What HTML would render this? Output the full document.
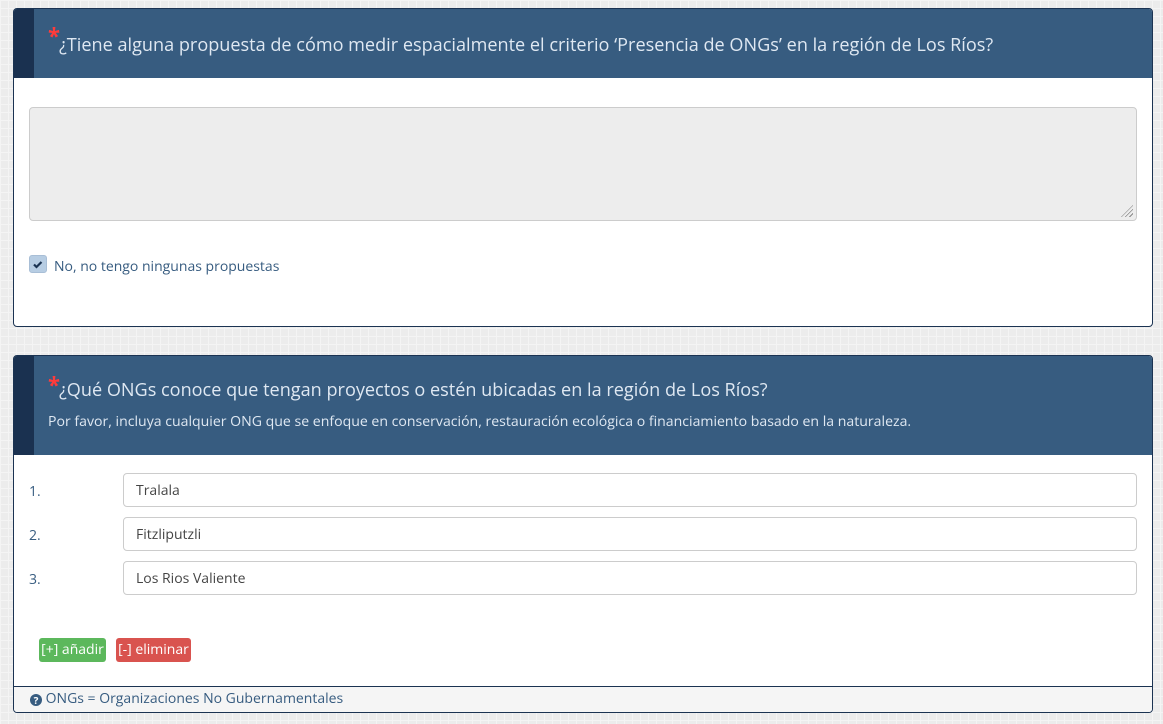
<!DOCTYPE html>
<html><head><meta charset="utf-8"><style>
*{box-sizing:border-box;margin:0;padding:0}
body{width:1163px;height:724px;overflow:hidden;font-family:"Open Sans","Liberation Sans","DejaVu Sans",sans-serif;background-color:#ececec;background-image:linear-gradient(#f4f4f4 1px,transparent 1px),linear-gradient(90deg,#f4f4f4 1px,transparent 1px);background-size:8px 8px;position:relative}
.panel{position:absolute;left:13px;width:1140px;background:#fff;border:1px solid #1b3352;border-radius:4px;overflow:hidden}
.hdr{background:#375c80;border-left:20px solid #1a3150;color:#dfe8f2;position:relative}
.ast{color:#ff3b3b;font-size:22px;font-weight:bold;position:absolute;top:12px;left:14px}
.t{font-size:18.1px}
.ta{position:absolute;left:15px;top:98px;width:1108px;height:114px;background:#ededed;border:1px solid #ccc;border-radius:4px}
.grip{position:absolute;right:3px;bottom:3px;width:12px;height:12px;background:repeating-linear-gradient(135deg,transparent 0 2px,#888 2px 3px);clip-path:polygon(100% 0,100% 100%,0 100%)}
.lbl{position:absolute;color:#375c80;font-size:14px}
.inp{position:absolute;left:109px;width:1014px;height:34px;border:1px solid #ccc;border-radius:4px;font-size:14px;color:#444;padding:7px 12px}
.btn{position:absolute;top:282px;height:24px;color:#fff;font-size:14px;border-radius:3px;padding:2px 0;line-height:20px;white-space:nowrap;overflow:hidden;text-align:center}
</style></head><body>
<div class="panel" style="top:8px;height:319px">
 <div class="hdr" style="height:69px"><span class="ast">*</span><div class="t" style="position:absolute;left:25px;top:24px">¿Tiene alguna propuesta de cómo medir espacialmente el criterio ‘Presencia de ONGs’ en la región de Los Ríos?</div></div>
 <div class="ta"><div class="grip"></div></div>
 <div style="position:absolute;left:15px;top:246px;width:18px;height:18px;background:#b7cde3;border:1px solid #a8bed6;border-radius:3px"><svg width="16" height="16" viewBox="0 0 16 16" style="position:absolute;left:0;top:0"><path d="M4 8.5l2.5 2.5 5-5" stroke="#1b3352" stroke-width="2.2" fill="none"/></svg></div>
 <div class="lbl" style="left:40px;top:248px">No, no tengo ningunas propuestas</div>
</div>
<div class="panel" style="top:355px;height:358px">
 <div class="hdr" style="height:99px"><span class="ast" style="top:14px">*</span><div class="t" style="position:absolute;left:25px;top:22px">¿Qué ONGs conoce que tengan proyectos o estén ubicadas en la región de Los Ríos?</div><div style="position:absolute;left:14px;top:56px;font-size:14.1px">Por favor, incluya cualquier ONG que se enfoque en conservación, restauración ecológica o financiamiento basado en la naturaleza.</div></div>
 <div class="lbl" style="left:15px;top:126px">1.</div><div class="inp" style="top:117px">Tralala</div>
 <div class="lbl" style="left:15px;top:170px">2.</div><div class="inp" style="top:161px">Fitzliputzli</div>
 <div class="lbl" style="left:15px;top:214px">3.</div><div class="inp" style="top:205px">Los Rios Valiente</div>
 <div class="btn" style="left:25px;width:67px;background:#5cb85c">[+] añadir</div>
 <div class="btn" style="left:102px;width:75px;background:#d9534f">[-] eliminar</div>
 <div style="position:absolute;left:0;top:330px;width:100%;height:28px;background:#f5f5f5;border-top:1px solid #1b3352;color:#375c80;font-size:14px;padding:2px 16px"><span style="display:inline-block;width:12px;height:12px;border-radius:50%;background:#375c80;color:#fff;font-size:10px;font-weight:bold;text-align:center;line-height:12px;vertical-align:-1px">?</span> ONGs = Organizaciones No Gubernamentales</div>
</div>
</body></html>
